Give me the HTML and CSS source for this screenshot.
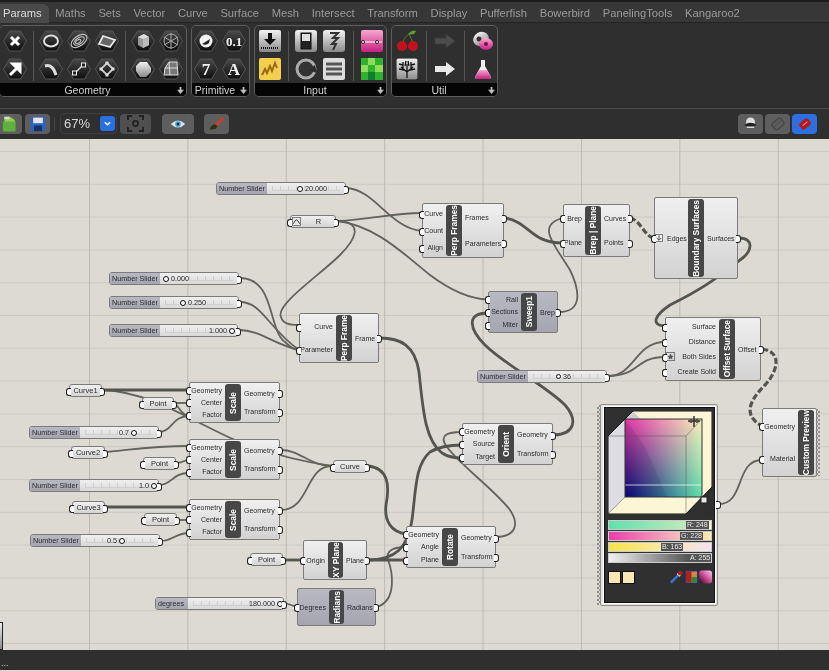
FILE: index.html
```html
<!DOCTYPE html>
<html lang="en">
<head>
  <meta charset="UTF-8">
  <title>Grasshopper canvas</title>
  <link rel="stylesheet" href="styles.css">
</head>
<body>
  <svg class="defs" width="0" height="0">
    <defs>
      <linearGradient id="hexfill" x1="0" y1="0" x2="0" y2="1">
        <stop offset="0" stop-color="#4a4a4a"/><stop offset="1" stop-color="#0c0c0c"/>
      </linearGradient>
      <linearGradient id="grey" x1="0" y1="0" x2="0" y2="1">
        <stop offset="0" stop-color="#f2f2f2"/><stop offset="1" stop-color="#8a8a8a"/>
      </linearGradient>
      <linearGradient id="pink" x1="0" y1="0" x2="0" y2="1">
        <stop offset="0" stop-color="#f8a8d0"/><stop offset="1" stop-color="#c81f7f"/>
      </linearGradient>
      <symbol id="hex" viewBox="0 0 24 24">
        <path d="M6.5 2H17.5L23.5 12L17.5 22H6.5L.5 12Z" fill="url(#hexfill)" stroke="#555"/>
      </symbol>
      <symbol id="plus" viewBox="0 0 8 8">
        <path d="M3 0H5V3H8L4 8L0 3H3Z" fill="#bbb"/>
      </symbol>
    </defs>
  </svg>

  <nav class="tabs">
    <span class="tab active">Params</span>
    <span class="tab">Maths</span>
    <span class="tab">Sets</span>
    <span class="tab">Vector</span>
    <span class="tab">Curve</span>
    <span class="tab">Surface</span>
    <span class="tab">Mesh</span>
    <span class="tab">Intersect</span>
    <span class="tab">Transform</span>
    <span class="tab">Display</span>
    <span class="tab">Pufferfish</span>
    <span class="tab">Bowerbird</span>
    <span class="tab">PanelingTools</span>
    <span class="tab">Kangaroo2</span>
  </nav>

  <div class="ribbon">
    <section class="panel panel-geometry">
      <div class="icons">
        <div class="set set-1">
          <svg class="ico" viewBox="0 0 24 24"><use href="#hex"/><path d="M8 8L16 16M16 8L8 16" stroke="#fff" stroke-width="3"/></svg>
          <svg class="ico" viewBox="0 0 24 24"><use href="#hex"/><path d="M7 18L14 11M10 7H17V14Z" stroke="#fff" stroke-width="3" fill="#fff"/></svg>
        </div>
        <i class="sep"></i>
        <div class="set set-3">
          <svg class="ico" viewBox="0 0 24 24"><use href="#hex"/><ellipse cx="12" cy="12" rx="7" ry="5.5" fill="none" stroke="#ddd" stroke-width="2"/></svg>
          <svg class="ico" viewBox="0 0 24 24"><use href="#hex"/><g fill="none" stroke="#bbb" stroke-width="1.2" transform="rotate(-35 12 12)"><ellipse cx="12" cy="12" rx="9" ry="5"/><ellipse cx="12" cy="12" rx="6" ry="3"/><ellipse cx="11" cy="12" rx="3" ry="1.5"/></g></svg>
          <svg class="ico" viewBox="0 0 24 24"><use href="#hex"/><path d="M8 7L20 11L15 18L4 15Z" fill="#666" stroke="#e8e8e8" stroke-width="1.8"/></svg>
          <svg class="ico" viewBox="0 0 24 24"><use href="#hex"/><path d="M6 9C11 7 15 11 17 18" fill="none" stroke="#ddd" stroke-width="3"/></svg>
          <svg class="ico" viewBox="0 0 24 24"><use href="#hex"/><path d="M8 16L16 8" stroke="#ddd" stroke-width="1.5"/><rect x="5.500" y="14" width="4" height="4" fill="#222" stroke="#eee"/><rect x="14.500" y="6" width="4" height="4" fill="#222" stroke="#eee"/></svg>
          <svg class="ico" viewBox="0 0 24 24"><use href="#hex"/><path d="M12 6L18 12L12 18L6 12Z" fill="none" stroke="#ccc" stroke-width="1.8"/><g fill="#ddd"><rect x="10.500" y="4.500" width="3" height="3"/><rect x="16.500" y="10.500" width="3" height="3"/><rect x="10.500" y="16.500" width="3" height="3"/><rect x="4.500" y="10.500" width="3" height="3"/></g></svg>
        </div>
        <i class="sep"></i>
        <div class="set set-2">
          <svg class="ico" viewBox="0 0 24 24"><use href="#hex"/><path d="M7 8L13 5L18 8V16L12 19L7 16Z" fill="#999"/><path d="M7 8L12 10L18 8L13 5Z" fill="#ddd"/><path d="M12 10V19L18 16V8Z" fill="#bbb"/></svg>
          <svg class="ico" viewBox="0 0 24 24"><use href="#hex"/><g stroke="#aaa" stroke-width="1" fill="none"><circle cx="12" cy="12" r="7"/><path d="M12 4V20M5 8L19 16M5 16L19 8"/></g></svg>
          <svg class="ico" viewBox="0 0 24 24"><use href="#hex"/><path d="M9 5H16L20 11V15L15 20H9L5 14V9Z" fill="url(#grey)"/></svg>
          <svg class="ico" viewBox="0 0 24 24"><use href="#hex"/><path d="M10 5H18L19 18H5L6 11Z" fill="#777" stroke="#ddd"/><path d="M10 5L11 18M6 11H19" stroke="#ddd"/></svg>
        </div>
      </div>
      <footer class="panel-foot"><span>Geometry</span><svg class="more" viewBox="0 0 8 8"><use href="#plus"/></svg></footer>
    </section>

    <section class="panel panel-primitive">
      <div class="icons">
        <div class="set set-2">
          <svg class="ico" viewBox="0 0 24 24"><use href="#hex"/><circle cx="12" cy="12" r="6.500" fill="#f2f2f2"/><path d="M8 15L16 10L15 14Q12 17 8 15Z" fill="#222"/></svg>
          <svg class="ico" viewBox="0 0 24 24"><use href="#hex"/><text class="ico-num" x="12" y="17" font-size="13">0.1</text></svg>
          <svg class="ico" viewBox="0 0 24 24"><use href="#hex"/><text class="ico-num" x="12" y="18" font-size="17">7</text></svg>
          <svg class="ico" viewBox="0 0 24 24"><use href="#hex"/><text class="ico-num" x="12" y="18" font-size="17">A</text></svg>
        </div>
      </div>
      <footer class="panel-foot"><span>Primitive</span><svg class="more" viewBox="0 0 8 8"><use href="#plus"/></svg></footer>
    </section>

    <section class="panel panel-input">
      <div class="icons">
        <div class="set set-1 tiles">
          <svg class="tile" viewBox="0 0 22 22"><rect width="22" height="22" rx="2" fill="url(#grey)"/><path d="M9 3H13V9H17L11 15L5 9H9Z" fill="#111"/><path d="M2 18H20" stroke="#111" stroke-width="2" stroke-dasharray="1 1"/></svg>
          <svg class="tile" viewBox="0 0 22 22"><rect width="22" height="22" rx="2" fill="#f4cf4e"/><path d="M3 17L6 11L8 15L11 8L13 13L16 5L18 10" fill="none" stroke="#9a6a12" stroke-width="2"/></svg>
        </div>
        <i class="sep"></i>
        <div class="set set-2 tiles">
          <svg class="tile" viewBox="0 0 22 22"><rect width="22" height="22" rx="3" fill="url(#grey)"/><rect x="6" y="3" width="10" height="16" fill="#222" stroke="#111"/><rect x="7" y="4" width="8" height="7" fill="#ddd"/></svg>
          <svg class="tile" viewBox="0 0 22 22"><rect width="22" height="22" rx="3" fill="url(#grey)"/><path d="M7 3H15L10 8H15L9 14H13L10 20" fill="none" stroke="#333" stroke-width="2"/></svg>
          <svg class="tile" viewBox="0 0 22 22"><circle cx="11" cy="11" r="9" fill="#333" stroke="#aaa" stroke-width="3"/><path d="M20 7L22 15L13 12Z" fill="#2f2f2f"/></svg>
          <svg class="tile" viewBox="0 0 22 22"><rect width="22" height="22" rx="2" fill="#ddd"/><path d="M3 6H19M3 11H19M3 16H19" stroke="#555" stroke-width="3"/></svg>
        </div>
        <i class="sep sep-wide"></i>
        <div class="set set-1 tiles">
          <svg class="tile" viewBox="0 0 22 22"><rect width="22" height="22" rx="2" fill="url(#pink)"/><path d="M1 12H21" stroke="#fff"/><circle cx="2" cy="12" r="1.500" fill="#fff" stroke="#222"/><circle cx="16" cy="12" r="1.500" fill="#fff" stroke="#222"/></svg>
          <svg class="tile" viewBox="0 0 22 22"><rect width="22" height="22" rx="2" fill="#8fdc5a"/><path d="M0 0H7V7H0ZM14 0H22V7H14ZM7 7H14V14H7ZM0 14H7V22H0ZM14 14H22V22H14Z" fill="#2fb32f"/><rect x="7" y="14" width="7" height="8" fill="#0f7f2f"/></svg>
        </div>
      </div>
      <footer class="panel-foot"><span>Input</span><svg class="more" viewBox="0 0 8 8"><use href="#plus"/></svg></footer>
    </section>

    <section class="panel panel-util">
      <div class="icons">
        <div class="set set-1 tiles">
          <svg class="tile" viewBox="0 0 22 22"><path d="M6 13Q9 6 13 4M17 13Q15 8 13 4" fill="none" stroke="#5a7a2a"/><path d="M12 4Q16 -1 20 1Q18 6 12 4Z" fill="#5f9c33"/><circle cx="6" cy="16" r="5" fill="#c4121c"/><circle cx="17" cy="16" r="5" fill="#c4121c"/></svg>
          <svg class="tile" viewBox="0 0 22 22"><rect width="22" height="22" rx="2" fill="url(#grey)" stroke="#111"/><path d="M11 20V13M11 14L5 9M11 14L17 9M8 12L3 11M14 12L19 11M7 10L7 4M15 10L15 4M9 8L10 3M13 8L12 3M7 7L3 6M15 7L19 6M11 13V6" fill="none" stroke="#111" stroke-width="1.300"/></svg>
        </div>
        <i class="sep sep-wide"></i>
        <div class="set set-1 tiles">
          <svg class="tile" viewBox="0 0 22 22"><path d="M1 8H12V4L21 11L12 18V14H1Z" fill="#4c4c4c" stroke="#3c3c3c"/></svg>
          <svg class="tile" viewBox="0 0 22 22"><path d="M1 8H12V4L21 11L12 18V14H1Z" fill="#e8e8e8"/></svg>
        </div>
        <i class="sep sep-wide"></i>
        <div class="set set-1 tiles">
          <svg class="tile" viewBox="0 0 22 22"><ellipse cx="9" cy="9" rx="8" ry="7" fill="url(#grey)" transform="rotate(-30 9 9)"/><circle cx="7" cy="9" r="2.500" fill="#333"/><ellipse cx="14" cy="14" rx="7" ry="6" fill="url(#pink)"/><circle cx="14" cy="14" r="2" fill="#7a0f4a"/></svg>
          <svg class="tile" viewBox="0 0 22 22"><path d="M9 2H13V8L19 19Q19 21 17 21H5Q3 21 3 19L9 8Z" fill="#eee"/><path d="M7 12H15L19 19Q19 21 17 21H5Q3 21 3 19Z" fill="url(#pink)"/></svg>
        </div>
      </div>
      <footer class="panel-foot"><span>Util</span><svg class="more" viewBox="0 0 8 8"><use href="#plus"/></svg></footer>
    </section>
  </div>

  <div class="toolbar">
    <button class="tool tool-open"><svg viewBox="0 0 20 20" width="16" height="16"><path d="M3 1H10L16 5V19H3Z" fill="#8fd04f"/><path d="M3 1H9V4H3Z" fill="#ddd"/><path d="M1 7H17V19H1Z" fill="#5cb23a"/></svg></button>
    <button class="tool tool-save"><svg viewBox="0 0 20 20" width="16" height="16"><path d="M1 1H19V19H1Z" fill="#2a62c8"/><rect x="4" y="2" width="12" height="7" fill="#e6e6e6"/><rect x="5" y="12" width="10" height="7" fill="#16315f"/></svg></button>
    <i class="tool-sep"></i>
    <div class="zoom-box"><span>67%</span><b class="zoom-caret"><svg viewBox="0 0 10 10" width="9" height="9"><path d="M2 3.500L5 6.500L8 3.500" fill="none" stroke="#fff" stroke-width="1.600"/></svg></b></div>
    <button class="tool tool-fit"><svg viewBox="0 0 20 20" width="17" height="17"><path d="M1 6V1H6M14 1H19V6M19 14V19H14M6 19H1V14" fill="none" stroke="#222" stroke-width="2.500"/><circle cx="10" cy="10" r="3" fill="none" stroke="#222" stroke-width="2"/></svg></button>
    <button class="tool tool-eye"><svg viewBox="0 0 20 12" width="16" height="10"><path d="M1 6Q10 -3 19 6Q10 15 1 6Z" fill="#dfe8f0"/><circle cx="10" cy="6" r="3.500" fill="#2f9fd8"/><circle cx="10" cy="6" r="1.500" fill="#123"/></svg></button>
    <button class="tool tool-paint"><svg viewBox="0 0 20 20" width="17" height="17"><path d="M8 11L17 2L19 4L11 13Z" fill="#d43a2a"/><path d="M2 17Q3 12 8 11L11 13Q10 18 2 17Z" fill="#331"/></svg></button>
    <div class="tool-right">
      <button class="tool"><svg viewBox="0 0 20 20" width="15" height="15"><circle cx="10" cy="8" r="6" fill="#ddd"/><path d="M2 12Q10 6 18 12Q10 19 2 12Z" fill="#222"/><path d="M5 15H15" stroke="#ddd" stroke-width="2"/></svg></button>
      <button class="tool"><svg viewBox="0 0 20 20" width="16" height="16"><rect x="3" y="5" width="14" height="10" rx="3" transform="rotate(-40 10 10)" fill="none" stroke="#444" stroke-width="1.600"/><path d="M4 15L15 4" stroke="#444"/></svg></button>
      <button class="tool tool-on"><svg viewBox="0 0 20 20" width="16" height="16"><rect x="3" y="5" width="14" height="10" rx="3" transform="rotate(-40 10 10)" fill="#b51818"/><path d="M7 12L13 7" stroke="#f08080" stroke-width="1.500"/></svg></button>
    </div>
  </div>

  <main class="canvas">
    <svg class="wires" viewBox="0 139 829 511" width="829" height="511">
      <g class="wire">
        <path d="M347 188C375 190 390 228 422 231"/>
        <path d="M337 221C370 220 390 213 422 213"/>
        <path d="M337 221C375 225 405 255 430 275C450 290 470 299 488 299.500"/>
        <path d="M337 221C365 222 355 240 340 255C320 275 275 305 281 317C283 324 290 325 299 325"/>
        <path d="M240 278C275 278 268 330 285 342C290 347 294 350 299 350"/>
        <path d="M240 302C262 302 268 328 299 350"/>
        <path d="M239 330C260 330 275 345 299 350"/>
        <path d="M559 312C580 312 582 295 570 270C555 245 535 225 563 218"/>
        <path d="M608 376C635 376 635 342 665 342"/>
        <path d="M608 376C640 376 635 357 665 357"/>
        <path d="M719 504C745 504 735 460 762 460"/>
        <path d="M103 390C150 392 190 420 235 440C260 450 290 460 332 466"/>
        <path d="M175 403L189 403"/>
        <path d="M175 403C180 410 184 416 189 416"/>
        <path d="M159 432C172 432 172 416 189 416"/>
        <path d="M106 452C130 450 150 446 189 446"/>
        <path d="M177 463C182 463 184 460 189 460"/>
        <path d="M159 485C172 485 172 473 189 473"/>
        <path d="M178 520L189 520"/>
        <path d="M161 541C172 541 176 533 189 533"/>
        <path d="M281 450C300 450 310 466 332 466"/>
        <path d="M281 510C310 510 305 466 332 466"/>
        <path d="M377 607C398 600 392 570 388 560C385 550 395 547 406 547"/>
        <path d="M285 603L297 607"/>
        <path d="M497 537C515 536 520 525 510 510C495 490 460 465 447 447C438 435 448 432 462 432"/>
      </g>
      <g class="wire wire-list">
        <path d="M380 338C400 338 415 345 419 372C423 410 425 440 442 453C448 457 455 458 462 458"/>
        <path d="M505 218C530 222 530 243 563 243"/>
        <path d="M554 435C575 434 578 420 565 405C545 385 505 365 485 345C470 330 465 313 488 313"/>
        <path d="M739 238C755 238 752 252 740 260C715 280 700 290 670 305C655 315 650 325 665 326"/>
        <path d="M103 390L189 390"/>
        <path d="M106 507L189 507"/>
        <path d="M368 466C388 468 390 485 386 505C384 522 392 532 406 534"/>
        <path d="M368 560C395 560 408 548 412 520C416 490 415 465 430 452C440 446 452 445 462 445"/>
        <path d="M368 560L406 560"/>
        <path d="M284 560L303 560"/>
      </g>
      <g class="wire wire-tree">
        <path d="M630 218C640 220 645 236 653 238"/>
        <path d="M762 349C785 352 775 375 765 385C750 400 742 415 762 426"/>
      </g>
    </svg>

    <div class="slider slider-20"><span class="slider-name">Number Slider</span><div class="track"><i class="grip"></i><span>20.000</span></div></div>
    <div class="slider slider-000"><span class="slider-name">Number Slider</span><div class="track"><i class="grip"></i><span>0.000</span></div></div>
    <div class="slider slider-250"><span class="slider-name">Number Slider</span><div class="track"><i class="grip"></i><span>0.250</span></div></div>
    <div class="slider slider-1000"><span class="slider-name">Number Slider</span><div class="track"><span>1.000</span><i class="grip"></i></div></div>
    <div class="slider slider-07"><span class="slider-name">Number Slider</span><div class="track"><span>0.7</span><i class="grip"></i></div></div>
    <div class="slider slider-10"><span class="slider-name">Number Slider</span><div class="track"><span>1.0</span><i class="grip"></i></div></div>
    <div class="slider slider-05"><span class="slider-name">Number Slider</span><div class="track"><span>0.5</span><i class="grip"></i></div></div>
    <div class="slider slider-36"><span class="slider-name">Number Slider</span><div class="track"><i class="grip grip-small"></i><span>36</span></div></div>
    <div class="slider slider-180"><span class="slider-name">degrees</span><div class="track"><span>180.000</span><i class="grip"></i></div></div>

    <div class="param param-r"><svg class="param-icon" viewBox="0 0 10 10"><rect x=".5" y=".5" width="9" height="9" fill="#e8e8e8" stroke="#777"/><path d="M1.500 7.500Q5 -1 8.500 7.500" fill="none" stroke="#333"/></svg><span>R</span></div>
    <div class="param param-curve1"><span>Curve1</span></div>
    <div class="param param-curve2"><span>Curve2</span></div>
    <div class="param param-curve3"><span>Curve3</span></div>
    <div class="param param-point1"><span>Point</span></div>
    <div class="param param-point2"><span>Point</span></div>
    <div class="param param-point3"><span>Point</span></div>
    <div class="param param-point4"><span>Point</span></div>
    <div class="param param-curve"><span>Curve</span></div>

    <div class="node perp-frames">
      <div class="ins"><span>Curve</span><span>Count</span><span>Align</span></div>
      <div class="name"><span>Perp Frames</span></div>
      <div class="outs"><span>Frames</span><span>Parameters</span></div>
    </div>
    <div class="node brep-plane">
      <div class="ins"><span>Brep</span><span>Plane</span></div>
      <div class="name"><span>Brep | Plane</span></div>
      <div class="outs"><span>Curves</span><span>Points</span></div>
    </div>
    <div class="node boundary">
      <div class="ins"><span><svg class="flag" viewBox="0 0 9 9"><rect x=".5" y=".5" width="8" height="8" fill="#eee" stroke="#777"/><path d="M4.500 1.500V7M2 4.500L4.500 7L7 4.500" fill="none" stroke="#444"/></svg>Edges</span></div>
      <div class="name"><span>Boundary Surfaces</span></div>
      <div class="outs"><span>Surfaces</span></div>
    </div>
    <div class="node node-dim sweep">
      <div class="ins"><span>Rail</span><span>Sections</span><span>Miter</span></div>
      <div class="name"><span>Sweep1</span></div>
      <div class="outs"><span>Brep</span></div>
    </div>
    <div class="node perp-frame">
      <div class="ins"><span>Curve</span><span>Parameter</span></div>
      <div class="name"><span>Perp Frame</span></div>
      <div class="outs"><span>Frame</span></div>
    </div>
    <div class="node offset">
      <div class="ins"><span>Surface</span><span>Distance</span><span><svg class="flag flag-wide" viewBox="0 0 9 9"><rect x=".5" y=".5" width="8" height="8" fill="#ddd" stroke="#777"/><path d="M4.500 1.500L5.500 3.500L7.500 4L6 5.500L6.500 7.500L4.500 6.500L2.500 7.500L3 5.500L1.500 4L3.500 3.500Z" fill="#555"/></svg>Both Sides</span><span>Create Solid</span></div>
      <div class="name"><span>Offset Surface</span></div>
      <div class="outs"><span>Offset</span></div>
    </div>
    <div class="node preview">
      <div class="ins"><span>Geometry</span><span>Material</span></div>
      <div class="name"><span>Custom Preview</span></div>
    </div>
    <div class="node scale scale1">
      <div class="ins"><span>Geometry</span><span>Center</span><span>Factor</span></div>
      <div class="name"><span>Scale</span></div>
      <div class="outs"><span>Geometry</span><span>Transform</span></div>
    </div>
    <div class="node scale scale2">
      <div class="ins"><span>Geometry</span><span>Center</span><span>Factor</span></div>
      <div class="name"><span>Scale</span></div>
      <div class="outs"><span>Geometry</span><span>Transform</span></div>
    </div>
    <div class="node scale scale3">
      <div class="ins"><span>Geometry</span><span>Center</span><span>Factor</span></div>
      <div class="name"><span>Scale</span></div>
      <div class="outs"><span>Geometry</span><span>Transform</span></div>
    </div>
    <div class="node scale orient">
      <div class="ins"><span>Geometry</span><span>Source</span><span>Target</span></div>
      <div class="name"><span>Orient</span></div>
      <div class="outs"><span>Geometry</span><span>Transform</span></div>
    </div>
    <div class="node scale rotate">
      <div class="ins"><span>Geometry</span><span>Angle</span><span>Plane</span></div>
      <div class="name"><span>Rotate</span></div>
      <div class="outs"><span>Geometry</span><span>Transform</span></div>
    </div>
    <div class="node xy-plane">
      <div class="ins"><span>Origin</span></div>
      <div class="name"><span>XY Plane</span></div>
      <div class="outs"><span>Plane</span></div>
    </div>
    <div class="node node-dim radians">
      <div class="ins"><span>Degrees</span></div>
      <div class="name"><span>Radians</span></div>
      <div class="outs"><span>Radians</span></div>
    </div>

    <!-- colour swatch -->
    <div class="swatch">
      <div class="swatch-inner">
        <svg class="cube" viewBox="608 411 104 103" width="104" height="103">
          <defs>
            <linearGradient id="rowTop"><stop offset="0" stop-color="#e636a6"/><stop offset="1" stop-color="#f9f2bc"/></linearGradient>
            <linearGradient id="rowBot"><stop offset="0" stop-color="#02027c"/><stop offset="1" stop-color="#5fe3a9"/></linearGradient>
            <linearGradient id="fade" x1="0" y1="0" x2="0" y2="1"><stop offset="0" stop-color="#fff"/><stop offset="1" stop-color="#000"/></linearGradient>
            <mask id="fadeMask"><rect x="625" y="419" width="77" height="78" fill="url(#fade)"/></mask>
          </defs>
          <path d="M633 411H712V487L686 514H608V436Z" fill="#fbf6d6"/>
          <path d="M608 436L625 419V497L608 514Z" fill="#dcdce2"/>
          <path d="M625 419L633 411L645 424L625 435Z" fill="#cfcfd2"/>
          <rect x="625" y="419" width="77" height="78" fill="url(#rowBot)"/>
          <rect x="625" y="419" width="77" height="78" fill="url(#rowTop)" mask="url(#fadeMask)"/>
          <path d="M625 419L645 447L667 497H625Z" fill="#223" opacity=".13"/>
          <path d="M608 436H686V514M686 436L702 419M608 514L625 497M686 514L702 497" fill="none" stroke="#555" stroke-opacity=".5"/>
          <path d="M625 485H702" stroke="#fff" stroke-opacity=".7"/>
          <rect x="625" y="419" width="77" height="78" fill="none" stroke="#333"/>
          <path d="M633 411H712V487L686 514H608V436Z" fill="none" stroke="#111"/>
          <path d="M694 416V427M688 421H700" stroke="#333" stroke-width="1.500"/>
          <circle cx="691" cy="421" r="1.500" fill="none" stroke="#444"/>
          <circle cx="697" cy="421" r="1.500" fill="none" stroke="#444"/>
          <path d="M698 514L712 499V514Z" fill="#2f2f2f"/>
          <rect x="701" y="497" width="6" height="6" fill="#e8e8e8" stroke="#222"/>
        </svg>
        <div class="bars">
          <div class="bar bar-r"><span>R: 248</span></div>
          <div class="bar bar-g"><span>G: 228</span></div>
          <div class="bar bar-b"><span>B: 163</span></div>
          <div class="bar bar-a"><span>A: 255</span></div>
        </div>
        <div class="swatch-tools">
          <i class="chip"></i><i class="chip"></i>
          <svg class="swatch-icon swatch-drop" viewBox="0 0 14 14"><path d="M1 13L9 5" stroke="#3a74d8" stroke-width="2.500"/><path d="M8 3L11 6" stroke="#eee" stroke-width="2"/><circle cx="11" cy="3" r="2.500" fill="#b02020"/></svg>
          <svg class="swatch-icon" viewBox="0 0 14 14"><rect width="14" height="14" fill="#1d2a8a"/><rect x="1" y="1" width="12" height="12" fill="#c84"/><path d="M1 1H7V13H1Z" fill="#a22"/><path d="M7 7H13V13H7Z" fill="#2a8a3a"/></svg>
          <svg class="swatch-icon" viewBox="0 0 14 14"><defs><linearGradient id="ball" x1="1" y1="0" x2="0" y2="1"><stop offset="0" stop-color="#f8d0e8"/><stop offset=".5" stop-color="#d04a98"/><stop offset="1" stop-color="#200818"/></linearGradient></defs><rect width="14" height="14" rx="3" fill="url(#ball)"/></svg>
        </div>
      </div>
    </div>

    <div class="edge-stub"></div>
  </main>

  <footer class="status"><span>...</span></footer>
</body>
</html>
```

FILE: styles.css
```css
* {
  margin: 0;
  padding: 0;
  box-sizing: border-box;
}
body {
  width: 829px;
  height: 671px;
  overflow: hidden;
  background: #dcdad3;
  font-family: "Liberation Sans", Arial, sans-serif;
  display: flex;
  flex-direction: column;
}
.defs {
  position: absolute;
}
/* the source window is a soft, scaled capture */
.tabs, .ribbon, .toolbar, .canvas {
  filter: blur(.35px);
}

/* tabs */
.tabs {
  height: 23px;
  flex: none;
  display: flex;
  gap: 12.7px;
  align-items: center;
  padding: 2px 0 0 3px;
  background: #373737;
  border-top: 2px solid #1d1d1d;
  border-bottom: 1px solid #232323;
  font-size: 11.2px;
  color: #9a9a9a;
}
.tab.active {
  color: #dcdcdc;
  background: #4a4a4a;
  margin: 0 -6px 0 -3px;
  padding: 3px 7px 4px 3px;
  border-radius: 0 6px 0 0;
}

/* ribbon */
.ribbon {
  height: 86px;
  flex: none;
  display: flex;
  gap: 4px;
  padding: 2px 0 0 0;
  background: #2f2f2f;
  border-bottom: 1px solid #4a4a4a;
}
.panel {
  height: 72px;
  border: 1px solid #5d5d5d;
  border-radius: 5px;
  display: flex;
  flex-direction: column;
  overflow: hidden;
}
.panel-geometry { width: 188px; margin-left: -1px; }
.panel-primitive { width: 59px; }
.panel-input { width: 133px; }
.panel-util { width: 107px; }
.icons {
  flex: 1;
  display: flex;
  padding: 3px 0 0 3px;
}
.set {
  display: grid;
  grid-template-rows: 24px 24px;
  grid-auto-flow: column;
  grid-auto-columns: 24px;
  gap: 4px 4px;
}
.set-3 { grid-template-columns: repeat(3, 24px); grid-auto-flow: row; }
.set-2 { grid-template-columns: repeat(2, 24px); grid-auto-flow: row; }
.panel-primitive .icons { padding-left: 2px; }
.sep {
  width: 1px;
  height: 50px;
  margin: 2px 5px 0 6px;
  background: #555;
}
.sep-wide { margin: 2px 6px 0 7px; }
.ico, .tile {
  width: 24px;
  height: 24px;
  display: block;
}
.tile { padding: 1px; }
.ico-num {
  font-family: "Liberation Serif", serif;
  font-weight: 700;
  fill: #f2f2f2;
  text-anchor: middle;
}
.panel-foot {
  height: 13px;
  flex: none;
  background: #050505;
  color: #d0d0d0;
  font-size: 10.5px;
  display: flex;
  align-items: center;
  justify-content: center;
  padding-right: 11px;
  position: relative;
}
.more {
  position: absolute;
  right: 2px;
  top: 4px;
  width: 7px;
  height: 7px;
}

/* toolbar */
.toolbar {
  height: 30px;
  flex: none;
  display: flex;
  align-items: center;
  background: #2f2f2f;
  padding-bottom: 1px;
}
.tool {
  height: 20px;
  width: 25px;
  border: none;
  border-radius: 4px;
  background: #5e5e5e;
  display: flex;
  align-items: center;
  justify-content: center;
}
.tool-open { margin-left: -3px; }
.tool-save { margin-left: 3px; }
.tool-sep {
  width: 1px;
  height: 14px;
  margin: 0 5px 0 4px;
  background: #444;
}
.zoom-box {
  width: 57px;
  height: 21px;
  display: flex;
  align-items: center;
  justify-content: space-between;
  padding: 0 1px 0 3px;
  border: 1px solid #3e3e3e;
  border-radius: 4px;
  color: #d8d8d8;
  font-size: 13px;
}
.zoom-caret {
  width: 15px;
  height: 15px;
  border-radius: 3px;
  background: #2b6fe0;
  display: flex;
  align-items: center;
  justify-content: center;
}
.tool-fit { width: 31px; margin-left: 3px; background: #4f4f4f; }
.tool-eye { width: 32px; margin-left: 11px; }
.tool-paint { margin-left: 10px; }
.tool-right {
  margin-left: auto;
  margin-right: 12px;
  display: flex;
  gap: 2px;
}
.tool-on { background: #2b6fe0; }

/* canvas */
.canvas {
  height: 511px;
  flex: none;
  position: relative;
  overflow: hidden;
  background-color: #dcdad3;
  background-image:
    linear-gradient(90deg, #bcbab3 1px, transparent 1px),
    linear-gradient(#cbc9c2 1px, transparent 1px);
  background-size: 98.4px 100%, 100% 32.8px;
  background-position: 89px 0, 0 12px;
}
.wires {
  position: absolute;
  left: 0;
  top: 0;
}
.wire path {
  fill: none;
  stroke: #63635d;
  stroke-width: 1.8;
}
.wire-list path {
  stroke: #55554f;
  stroke-width: 2.8;
}
.wire-tree path {
  stroke: #55554f;
  stroke-width: 3.2;
  stroke-dasharray: 6 2.5;
}

/* components */
.node {
  position: absolute;
  display: grid;
  border: 1px solid #7b7b7b;
  border-radius: 2px;
  background: linear-gradient(#f0f0f0, #d2d2d2);
  font-size: 7px;
  color: #2c2c2c;
}
.node-dim {
  background: linear-gradient(#b9b9c2, #a5a5b0);
  color: #2a2a30;
}
.ins, .outs {
  display: flex;
  flex-direction: column;
  justify-content: space-around;
  padding: 1px 0;
}
.ins { text-align: right; }
.ins span, .outs span {
  position: relative;
  display: block;
  line-height: 9px;
  white-space: nowrap;
}
.ins span { padding-right: 3px; }
.outs span { padding-left: 3px; }

/* ports: a small half ring on the component edge */
.ins span::before, .param::before {
  content: "";
  position: absolute;
  width: 4px;
  height: 6px;
  top: 1.5px;
  left: -4px;
  border: 1.3px solid #222;
  border-right: none;
  border-radius: 3px 0 0 3px;
  background: #fff;
}
.outs span::after, .param::after, .slider::after, .swatch::after {
  content: "";
  position: absolute;
  width: 4px;
  height: 6px;
  top: 1.5px;
  right: -4px;
  border: 1.3px solid #222;
  border-left: none;
  border-radius: 0 3px 3px 0;
  background: #fff;
}
.name {
  margin: 1px 0;
  border-radius: 3px;
  background: #474747;
  color: #fff;
  font-size: 8.4px;
  font-weight: 700;
  display: flex;
  align-items: center;
  justify-content: center;
  overflow: hidden;
}
.name span {
  writing-mode: vertical-rl;
  transform: rotate(180deg);
  white-space: nowrap;
}

.perp-frames { left: 422px; top: 64px; width: 82px; height: 55px; grid-template-columns: 23px 16px 1fr; }
.brep-plane { left: 563px; top: 65px; width: 67px; height: 53px; grid-template-columns: 21px 16px 1fr; }
.boundary { left: 654px; top: 58px; width: 84px; height: 82px; grid-template-columns: 33px 16px 1fr; }
.sweep { left: 488px; top: 152px; width: 70px; height: 42px; grid-template-columns: 32px 16px 1fr; }
.perp-frame { left: 299px; top: 174px; width: 80px; height: 50px; grid-template-columns: 36px 16px 1fr; }
.offset { left: 665px; top: 178px; width: 96px; height: 64px; grid-template-columns: 53px 16px 1fr; }
.preview { left: 762px; top: 269px; width: 55px; height: 69px; grid-template-columns: 35px 16px 1fr; }
.scale { grid-template-columns: 35px 16px 1fr; }
.scale1 { left: 189px; top: 243px; width: 91px; height: 41px; }
.scale2 { left: 189px; top: 300px; width: 91px; height: 41px; }
.scale3 { left: 189px; top: 360px; width: 91px; height: 41px; }
.orient { left: 462px; top: 284px; width: 91px; height: 42px; }
.rotate { left: 406px; top: 387px; width: 90px; height: 42px; }
.xy-plane { left: 303px; top: 401px; width: 64px; height: 40px; grid-template-columns: 24px 15px 1fr; }
.radians { left: 297px; top: 449px; width: 79px; height: 38px; grid-template-columns: 31px 15px 1fr; }

.flag {
  width: 8px;
  height: 8px;
  vertical-align: -1.500px;
  margin-right: 4px;
}
.flag-wide { margin-right: 7px; width: 9px; height: 9px; vertical-align: -2px; }
.preview::after {
  content: "";
  position: absolute;
  top: 0;
  bottom: 0;
  right: -4px;
  width: 4px;
  background:
    linear-gradient(-135deg, transparent 40%, #8f8f8f 40% 60%, transparent 60%) 0 0 / 4px 4px,
    linear-gradient(-45deg, transparent 40%, #8f8f8f 40% 60%, transparent 60%) 0 2px / 4px 4px;
}

.param {
  position: absolute;
  height: 13px;
  display: flex;
  align-items: center;
  justify-content: center;
  border: 1px solid #7b7b7b;
  border-radius: 3px;
  background: linear-gradient(#f0f0f0, #d4d4d4);
  font-size: 7.5px;
  color: #2c2c2c;
}
.param::before, .param::after { top: 2.5px; }
.param-icon {
  position: absolute;
  left: 1px;
  top: 1px;
  width: 9px;
  height: 9px;
}
.param-r { left: 290px; top: 76px; width: 46px; }
.param-r span { margin-left: 11px; }
.param-curve1 { left: 69px; top: 245px; width: 33px; }
.param-curve2 { left: 71px; top: 307px; width: 34px; }
.param-curve3 { left: 72px; top: 362px; width: 33px; }
.param-point1 { left: 142px; top: 258px; width: 32px; }
.param-point2 { left: 143px; top: 318px; width: 33px; }
.param-point3 { left: 144px; top: 374px; width: 33px; }
.param-point4 { left: 250px; top: 414px; width: 33px; }
.param-curve { left: 333px; top: 321px; width: 34px; }

.slider {
  position: absolute;
  width: 130px;
  height: 13px;
  display: flex;
  border: 1px solid #7b7b7b;
  border-radius: 3px;
  font-size: 7.2px;
  color: #2c2c2c;
}
.slider::after { top: 2.5px; }
.slider-name {
  width: 50px;
  flex: none;
  padding-left: 2px;
  line-height: 11px;
  border-radius: 2px 0 0 2px;
  background: linear-gradient(#b9b9c2, #a4a4ae);
  white-space: nowrap;
}
.track {
  flex: 1;
  position: relative;
  display: flex;
  align-items: center;
  gap: 2px;
  background: linear-gradient(#f0f0f0, #d8d8d8);
  border-radius: 0 2px 2px 0;
}
.track::before {
  content: "";
  position: absolute;
  left: 5px;
  right: 5px;
  top: 3px;
  height: 4px;
  border-bottom: 1px solid #d0d0d0;
  background: repeating-linear-gradient(90deg, #cfcfcf 0 1px, transparent 1px 8px);
}
.track span {
  position: relative;
}
.grip {
  position: relative;
  flex: none;
  width: 6px;
  height: 6px;
  border: 1.5px solid #111;
  border-radius: 50%;
  background: #fff;
}
.grip-small { width: 5px; height: 5px; }

.slider-20 { left: 216px; top: 43px; }
.slider-20 .track { padding-left: 30px; }
.slider-000 { left: 109px; top: 133px; }
.slider-000 .track { padding-left: 3px; }
.slider-250 { left: 109px; top: 157px; }
.slider-250 .track { padding-left: 20px; }
.slider-1000 { left: 109px; top: 185px; width: 129px; }
.slider-1000 .track { padding-left: 49px; }
.slider-07 { left: 29px; top: 287px; }
.slider-07 .track { padding-left: 39px; }
.slider-10 { left: 29px; top: 340px; }
.slider-10 .track { padding-left: 59px; }
.slider-05 { left: 30px; top: 395px; }
.slider-05 .track { padding-left: 26px; }
.slider-36 { left: 477px; top: 231px; }
.slider-36 .track { padding-left: 28px; }
.slider-180 { left: 155px; top: 458px; width: 129px; }
.slider-180 .slider-name { width: 32px; }
.slider-180 .track { padding-left: 61px; }

/* colour swatch */
.swatch {
  position: absolute;
  left: 600px;
  top: 265px;
  width: 118px;
  height: 202px;
  padding: 2px 2px 2px 3px;
  border: 1px solid #8f8f8f;
  border-radius: 2px;
  background: #e4e4e4;
}
.swatch::before {
  content: "";
  position: absolute;
  top: 0;
  bottom: 0;
  left: -4px;
  width: 4px;
  background:
    linear-gradient(135deg, transparent 40%, #8f8f8f 40% 60%, transparent 60%) 0 0 / 4px 4px,
    linear-gradient(45deg, transparent 40%, #8f8f8f 40% 60%, transparent 60%) 0 2px / 4px 4px;
}
.swatch::after { top: 96px; }
.swatch-inner {
  height: 100%;
  padding: 3px 0 0 3px;
  background: #303030;
  border: 1px solid #111;
  outline: 1px solid #fff;
}
.cube {
  display: block;
}
.bars {
  margin-top: 6px;
  width: 104px;
  display: flex;
  flex-direction: column;
  gap: 1px;
}
.bar {
  height: 10px;
  display: flex;
  align-items: center;
  border: 1px solid #ccc;
  font-size: 7px;
  color: #e8e8e8;
}
.bar span {
  background: #555;
  height: 100%;
  line-height: 8px;
  padding: 0 1px;
  white-space: nowrap;
}
.bar-r { padding-left: 77px; background: linear-gradient(90deg, #5fe0ae, #bfe9bc 75%, #faf1c8); }
.bar-g { padding-left: 71px; background: linear-gradient(90deg, #e83fa9, #f4b6bf 65%, #f9ecaa); }
.bar-b { padding-left: 52px; background: linear-gradient(90deg, #f7e346, #f9e8a0 50%, #f3e2f0); }
.bar-a { padding-left: 80px; background: linear-gradient(90deg, #f0f0f0, #d0d0d0 18%, #555 78%); }
.swatch-tools {
  margin-top: 7px;
  width: 104px;
  display: flex;
  align-items: center;
}
.chip {
  width: 13px;
  height: 13px;
  margin-right: 1px;
  background: #f9e8b4;
  border: 1px solid #111;
}
.swatch-icon {
  width: 13px;
  height: 14px;
  margin-left: 1.5px;
}
.swatch-drop { margin-left: auto; }

.edge-stub {
  position: absolute;
  left: 0;
  top: 483px;
  width: 3px;
  height: 28px;
  border: 1px solid #222;
  border-left: none;
  background: linear-gradient(#eee, #888);
}

/* status bar */
.status {
  height: 20px;
  flex: none;
  background: #2f2f2f;
  color: #d0d0d0;
  font-size: 9px;
  line-height: 26px;
  padding-left: 1px;
  overflow: hidden;
}
```
